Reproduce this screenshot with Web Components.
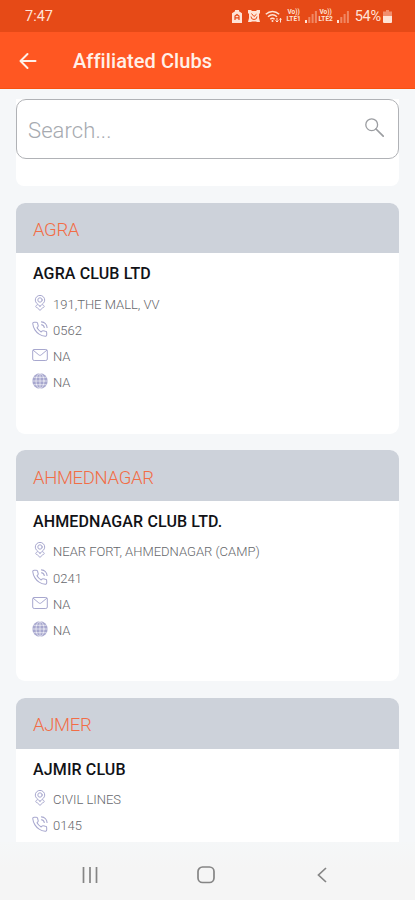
<!DOCTYPE html>
<html lang="en">
<head>
<meta charset="utf-8">
<meta name="viewport" content="width=device-width, initial-scale=1">
<title>Affiliated Clubs</title>
<style>
  body {
    margin: 0;
    font-family: Roboto, "Liberation Sans", sans-serif;
  }
</style>
</head>
<body>
<clubs-app></clubs-app>

<script>
const ICONS = {
  back: `<path d="M16.500 9H2M8.500 2 1.500 9l7 7" stroke-width="2"/>`,
  search: `<circle cx="6.700" cy="6.700" r="5.900" stroke-width="1.300"/><path d="m11 11 7.200 7.200" stroke-width="1.700"/>`,
  pin: `<path d="M8 11.200C5.600 9.300 3.300 7.600 3.300 5.100a4.700 4.700 0 0 1 9.400 0c0 2.500-2.300 4.200-4.700 6.100z"/><circle cx="8" cy="5" r="2.200"/><path d="M5.300 9.800c-2.200.9-2 2.600 0 3L8 15.400l2.700-2.600c2-.4 2.200-2.100 0-3"/>`,
  phone: `<g transform="translate(-.7 -.5) scale(.7)"><path d="M23 17.500v3a2 2 0 0 1-2.200 2 19.800 19.800 0 0 1-8.600-3.100 19.500 19.500 0 0 1-6-6 19.800 19.800 0 0 1-3.100-8.700A2 2 0 0 1 5.100 2.500h3a2 2 0 0 1 2 1.700c.1 1 .4 1.900.7 2.800a2 2 0 0 1-.5 2.100l-1.200 1.300a16 16 0 0 0 6 6l1.200-1.300a2 2 0 0 1 2.100-.4c.9.3 1.800.5 2.800.7a2 2 0 0 1 1.800 2.100z" transform="translate(-1 0)" stroke-width="1.500"/><path d="M14.500 2a8.500 8.500 0 0 1 8 8M14.500 6a4.500 4.500 0 0 1 4 4" stroke-width="1.600"/></g>`,
  mail: `<rect x=".7" y="2.500" width="14.600" height="11" rx="1.500"/><path d="m1.200 3.200 5.600 4.700c.7.600 1.700.600 2.400 0l5.600-4.700"/>`,
  globe: `<circle cx="8" cy="8" r="7.700" fill="currentColor" stroke="none"/><path d="M.5 8h15M8 .5v15M1.800 4.300h12.400M1.800 11.700h12.400" stroke="#fff" stroke-width=".6"/><ellipse cx="8" cy="8" rx="4" ry="7.500" stroke="#fff" stroke-width=".6"/>`
};

const icon = (name, box = 16) =>
  `<svg viewBox="0 0 ${box} ${box}" fill="none" stroke="currentColor" stroke-linecap="round" stroke-linejoin="round" aria-hidden="true">${ICONS[name]}</svg>`;

function define(name, html) {
  const template = document.createElement("template");
  template.innerHTML = html;
  customElements.define(name, class extends HTMLElement {
    constructor() {
      super();
      this.attachShadow({ mode: "open" }).appendChild(template.content.cloneNode(true));
    }
  });
}

define("volte-signal", `
  <style>
    :host { display: flex; align-items: flex-end; gap: 2px; height: 14px; }
    .label { display: flex; flex-direction: column; font: 700 6.500px/7px Roboto, sans-serif; text-align: center; width: 16px; }
    svg { width: 13px; height: 12px; display: block; }
  </style>
  <div class="label"><span>Vo))</span><span><slot></slot></span></div>
  <svg viewBox="0 0 13 12" fill="currentColor">
    <path d="M1 9h2v3H1z"/><path opacity=".4" d="M4.300 6h2v6h-2zM7.600 3h2v9h-2zM10.900 0h2v12h-2z"/>
  </svg>
`);

define("status-bar", `
  <style>
    :host {
      display: flex; align-items: center; justify-content: space-between;
      box-sizing: border-box; height: 32px; padding: 0 23px 0 25px;
      background: #e64a17; color: #ffe3d6; font-size: 14.500px;
    }
    .right, .battery { display: flex; align-items: center; }
    .battery { gap: 2px; letter-spacing: -.2px; margin-left: 6px; }
    .save { width: 10px; height: 13px; }
    .alarm { width: 12px; height: 12px; margin-left: 6px; }
    .wifi { width: 17px; height: 13px; margin: 0 4px 0 5px; }
    .cell { width: 9px; height: 13px; }
    volte-signal + volte-signal { margin-left: 1px; }
  </style>
  <span>7:47</span>
  <div class="right">
    <svg class="save" viewBox="0 0 10 13"><path fill="currentColor" d="M3 0h4v1.300l3 2V13H0V3.300l3-2z"/><path d="M3 10V6l2-1.500L7 6v4M3 7.800h4" fill="none" stroke="#e64a17" stroke-width="1.200"/></svg>
    <svg class="alarm" viewBox="0 0 12 12"><path fill="currentColor" d="M0 0h3l1 1h4l1-1h3v3l-1 1v4l1 4H9l-1-.5H4L3 12H0l1-4V4L0 3z"/><path d="M3.500 3.500 6 6.500l2.500-2.300M9 6.500a3 3 0 0 1-6 0" fill="none" stroke="#e64a17"/></svg>
    <svg class="wifi" viewBox="0 0 17 13" fill="none" stroke="currentColor" stroke-width="1.500"><path d="M.8 4.200c4-3.700 9.400-3.700 13.400 0M3 6.800c2.700-2.500 6.300-2.500 9 0M5.300 9.200c1.300-1.100 3-1.100 4.300 0"/><circle cx="7.500" cy="11" r="1" fill="currentColor" stroke="none"/><path d="M12 8v4m-1.500-1.500L12 12l1.500-1.500M15.500 12.500V8.300M14.500 9.500l1-1.200 1 1.200" stroke-width="1"/></svg>
    <volte-signal>LTE1</volte-signal>
    <volte-signal>LTE2</volte-signal>
    <div class="battery"><span>54%</span>
      <svg class="cell" viewBox="0 0 9 13" fill="currentColor"><path opacity=".45" d="M3 0h3v1.500h3V6H0V1.500h3z"/><path d="M0 6h9v6q0 1-1 1H1q-1 0-1-1z"/></svg>
    </div>
  </div>
`);

define("app-header", `
  <style>
    :host {
      display: flex; align-items: center; box-sizing: border-box; height: 57px;
      padding: 2px 19px 0; background: #ff5722; color: #fff0e8;
      border-bottom: 1px solid #f7520f;
    }
    svg { width: 18px; height: 18px; margin-right: 36px; }
    h1 { margin: 0; font-size: 20px; font-weight: 500; letter-spacing: .08px; }
  </style>
  ${icon("back", 18)}
  <h1><slot></slot></h1>
`);

define("search-box", `
  <style>
    :host { display: block; height: 87px; background: #fff; border-radius: 0 0 8px 8px; }
    .field {
      display: flex; align-items: center; justify-content: space-between;
      box-sizing: border-box; height: 60px; padding: 2px 14px 0 11px;
      border: 1.500px solid #b0b2b6; border-radius: 10px; background: #fff;
      color: #a6aab0; font-size: 22px; font-weight: 300; letter-spacing: .1px;
    }
    svg { width: 19px; height: 19px; margin-top: -6px; color: #9b9da1; }
  </style>
  <div class="field"><slot></slot>${icon("search", 19)}</div>
`);

define("contact-row", `
  <style>
    :host { display: flex; align-items: center; gap: 5px; height: 26.100px; color: #66676c; font-size: 13px; font-weight: 300; white-space: nowrap; }
    .icon { display: none; width: 16px; height: 16px; color: #a7a7ce; margin-top: -3px; }
    svg { display: block; width: 16px; height: 16px; }
    :host([type="pin"]) .pin, :host([type="phone"]) .phone,
    :host([type="mail"]) .mail, :host([type="globe"]) .globe { display: block; }
  </style>
  ${["pin", "phone", "mail", "globe"].map(name => `<span class="icon ${name}">${icon(name)}</span>`).join("")}
  <span><slot></slot></span>
`);

define("club-card", `
  <style>
    :host { display: block; flex: none; height: 231px; border-radius: 9px; background: #fff; overflow: hidden; }
    header {
      display: flex; align-items: center; box-sizing: border-box; height: 50.500px; padding: 4px 17px 0;
      background: #cdd2da; color: #f26d46; font-size: 18.500px; font-weight: 300; letter-spacing: -.35px;
    }
    .body { padding: 11px 16px 0; }
    h2 { margin: 0 1px 7px; color: #111216; font-size: 16px; line-height: 20px; font-weight: 500; letter-spacing: .13px; }
  </style>
  <header><slot name="city"></slot></header>
  <div class="body">
    <h2><slot name="club"></slot></h2>
    <slot></slot>
  </div>
`);

define("nav-bar", `
  <style>
    :host { display: flex; align-items: center; justify-content: center; height: 58px; padding-top: 8px; box-sizing: border-box; background: linear-gradient(#f5f7f8, #f5f5f5 45%); }
    svg { width: 250px; height: 20px; margin-right: 2px; }
  </style>
  <svg viewBox="0 0 250 20" fill="none" stroke="#858585" stroke-width="1.700">
    <path d="M1.500 2v16M8 2v16M14.500 2v16"/>
    <rect x="116" y="2" width="16" height="15.500" rx="4.500"/>
    <path d="m244 3-7.500 7 7.500 7"/>
  </svg>
`);

const clubs = [
  { city: "AGRA", club: "AGRA CLUB LTD", address: "191,THE MALL, VV", phone: "0562", mail: "NA", site: "NA" },
  { city: "AHMEDNAGAR", club: "AHMEDNAGAR CLUB LTD.", address: "NEAR FORT, AHMEDNAGAR (CAMP)", phone: "0241", mail: "NA", site: "NA" },
  { city: "AJMER", club: "AJMIR CLUB", address: "CIVIL LINES", phone: "0145" }
];

const row = (type, text) => text ? `<contact-row type="${type}">${text}</contact-row>` : "";

define("clubs-app", `
  <style>
    :host { display: flex; flex-direction: column; height: 900px; background: #f5f7f9; overflow: hidden; }
    status-bar, app-header, nav-bar { flex: none; }
    main {
      flex: 1; min-height: 0; overflow: hidden; box-sizing: border-box;
      display: flex; flex-direction: column; gap: 16.700px; padding: 10px 16px 0;
    }
    search-box { flex: none; }
  </style>
  <status-bar></status-bar>
  <app-header>Affiliated Clubs</app-header>
  <main>
    <search-box>Search...</search-box>
    ${clubs.map(c => `
      <club-card>
        <span slot="city">${c.city}</span>
        <span slot="club">${c.club}</span>
        ${row("pin", c.address)}${row("phone", c.phone)}${row("mail", c.mail)}${row("globe", c.site)}
      </club-card>`).join("")}
  </main>
  <nav-bar></nav-bar>
`);
</script>
</body>
</html>
